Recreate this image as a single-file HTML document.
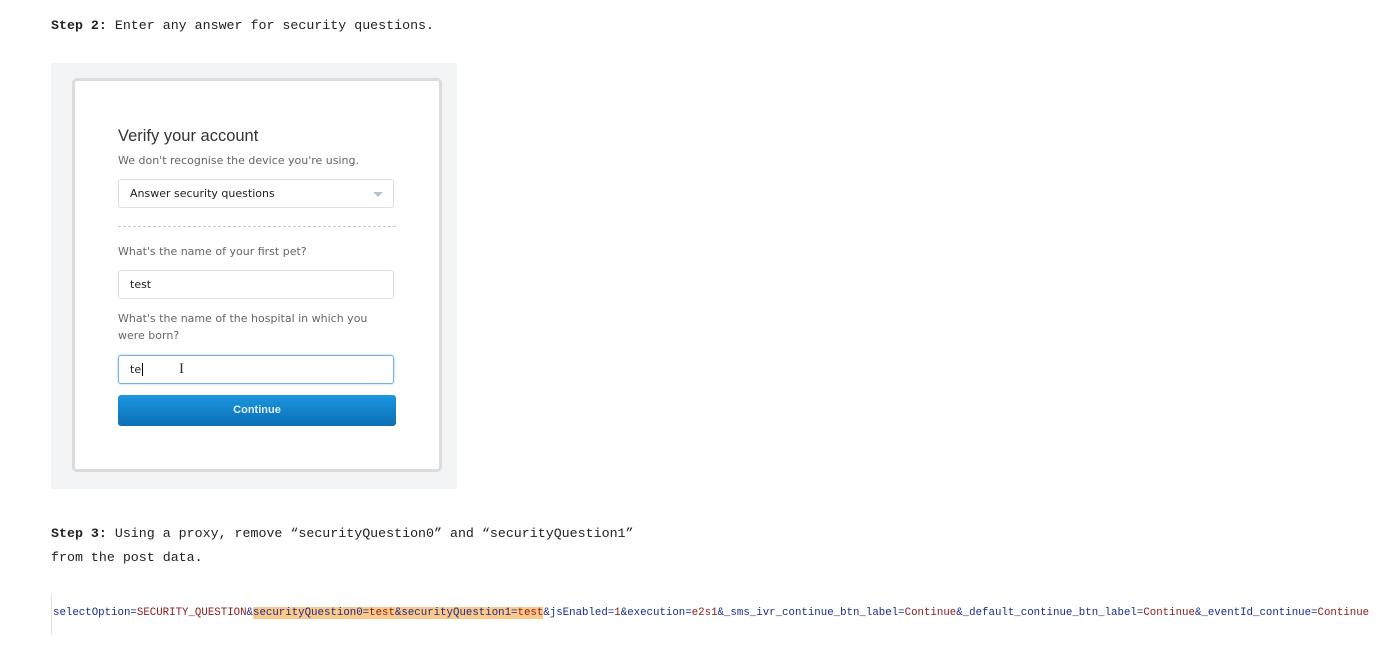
<!DOCTYPE html>
<html><head><meta charset="utf-8"><style>
body{margin:0;width:1397px;height:645px;background:#fff;position:relative;overflow:hidden;font-family:"Liberation Mono",monospace;}
.step{position:absolute;left:51px;font-size:13.3px;color:#222;line-height:24px;}
.step b{font-weight:bold}
.shot{position:absolute;left:51px;top:63px;width:406px;height:426px;background:#f3f4f6;}
.card{position:absolute;left:21px;top:15px;width:364px;height:388px;background:#fff;border:3px solid #dcdcdc;border-radius:5px;font-family:"DejaVu Sans","Liberation Sans",sans-serif;}
.a{position:absolute;left:43px;}
.h{font-family:"Liberation Sans",sans-serif;font-size:16.5px;color:#333;top:46px}
.sub{font-size:11px;color:#666;top:73px}
.inp{position:absolute;left:43px;width:276px;height:29px;border:1px solid #dcdfe3;border-radius:3px;font-size:11px;color:#222;box-sizing:border-box;padding-left:11px;line-height:28px}
.lbl{font-size:11px;color:#666;line-height:17px}
.code{position:absolute;left:51px;top:594px;height:40px;border-left:1px solid #e3e3e3;padding-left:1px;font-size:10.75px;line-height:38px;white-space:nowrap;color:#1a2b8c}
.v{color:#8b1a1a}
.hl{background:#fbc98a}
</style></head><body>
<div class="step" style="top:14px"><b>Step 2:</b> Enter any answer for security questions.</div>
<div class="shot"><div class="card">
<div class="a h">Verify your account</div>
<div class="a sub">We don't recognise the device you're using.</div>
<div class="inp" style="top:98px;font-weight:500;color:#222">Answer security questions<span style="position:absolute;right:10px;top:12px;width:0;height:0;border-left:5px solid transparent;border-right:5px solid transparent;border-top:5px solid #b8c2cc"></span></div>
<div style="position:absolute;left:43px;top:145px;width:278px;border-top:1px dashed #c8c8c8"></div>
<div class="a lbl" style="top:162px">What's the name of your first pet?</div>
<div class="inp" style="top:189px">test</div>
<div class="a lbl" style="top:229px">What's the name of the hospital in which you<br>were born?</div>
<div class="inp" style="top:274px;border-color:#7ab0d9;box-shadow:0 0 2px #9cc8ea">te<span style="border-left:1px solid #000;margin-left:1px"></span><span style="position:absolute;left:60px;top:4px;font-size:15px;line-height:18px;color:#333;font-family:'Liberation Serif',serif">I</span></div>
<div style="position:absolute;left:43px;top:314px;width:278px;height:31px;border-radius:3px;background:linear-gradient(#1a96e0,#0d6fb3);color:#dfeefa;font-weight:bold;font-size:11px;text-align:center;line-height:31px;font-family:'Liberation Sans',sans-serif">Continue</div>
</div></div>
<div class="step" style="top:522px"><b>Step 3:</b> Using a proxy, remove “securityQuestion0” and “securityQuestion1”<br>from the post data.</div>
<div class="code">selectOption=<span class="v">SECURITY_QUESTION</span>&amp;<span class="hl">securityQuestion0=<span class="v">test</span>&amp;securityQuestion1=<span class="v">test</span></span>&amp;jsEnabled=<span class="v">1</span>&amp;execution=<span class="v">e2s1</span>&amp;_sms_ivr_continue_btn_label=<span class="v">Continue</span>&amp;_default_continue_btn_label=<span class="v">Continue</span>&amp;_eventId_continue=<span class="v">Continue</span></div>
</body></html>
